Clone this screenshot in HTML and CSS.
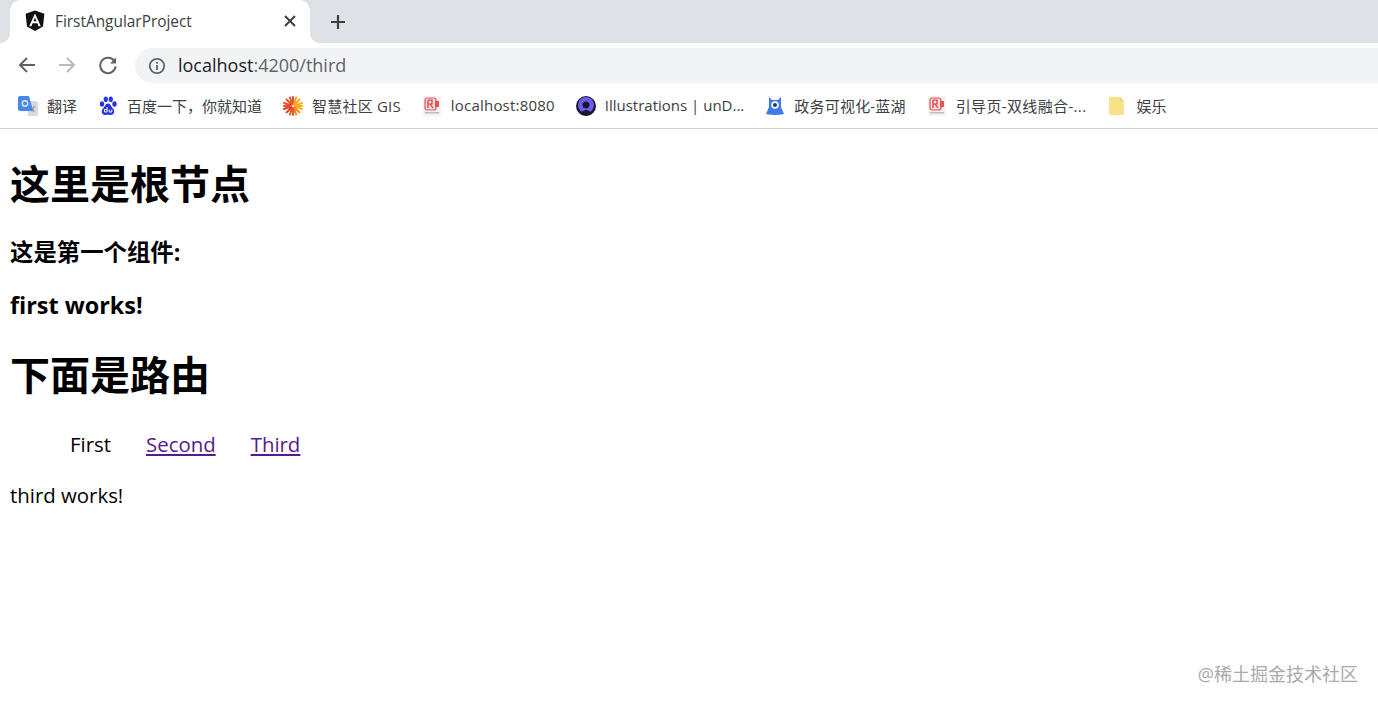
FILE: index.html
```html
<!DOCTYPE html>
<html lang="zh">
<head>
  <meta charset="UTF-8">
  <title>FirstAngularProject</title>
  <link rel="stylesheet" href="styles.css">
</head>
<body>
  <!-- Tab strip -->
  <div class="tabstrip">
    <div class="tab">
      <svg class="tab-icon" width="20" height="22" viewBox="0 0 20 22">
        <path d="M10 0.5 L0.6 3.8 L2 16.4 L10 21 L18 16.4 L19.4 3.8 Z" fill="#111"/>
        <path d="M10 3.4 L4.2 16.2 H6.4 L7.6 13.2 H12.4 L13.6 16.2 H15.8 Z M8.5 11.3 L10 7.7 L11.5 11.3 Z" fill="#fff" fill-rule="evenodd"/>
      </svg>
      <span class="tab-title">FirstAngularProject</span>
      <svg class="tab-close" width="12" height="12" viewBox="0 0 12 12">
        <path d="M1 1 L11 11 M11 1 L1 11" stroke="#3c4043" stroke-width="2" fill="none"/>
      </svg>
    </div>
    <svg class="new-tab" width="16" height="16" viewBox="0 0 16 16">
      <path d="M8 1 V15 M1 8 H15" stroke="#3c4043" stroke-width="2.2" fill="none"/>
    </svg>
  </div>

  <!-- Toolbar -->
  <div class="toolbar">
    <div class="nav-btns">
      <svg width="20" height="20" viewBox="0 0 20 20">
        <path d="M18 10 H3 M10 3 L3 10 L10 17" stroke="#5f6368" stroke-width="2" fill="none"/>
      </svg>
      <svg width="20" height="20" viewBox="0 0 20 20">
        <path d="M2 10 H17 M10 3 L17 10 L10 17" stroke="#b9bbbe" stroke-width="2" fill="none"/>
      </svg>
      <svg width="20" height="20" viewBox="-1 0 20 20">
        <path d="M16.4 6.2 A7.7 7.7 0 1 0 17.6 11.4" stroke="#5f6368" stroke-width="2" fill="none"/>
        <path d="M18 2.4 V8.4 H12 Z" fill="#5f6368"/>
      </svg>
    </div>
    <div class="omnibox">
      <svg width="18" height="18" viewBox="0 0 18 18">
        <circle cx="9" cy="9" r="7.2" stroke="#5f6368" stroke-width="1.8" fill="none"/>
        <path d="M9 8 V13 M9 5 V6.8" stroke="#5f6368" stroke-width="1.8" fill="none"/>
      </svg>
      <span class="url"><span class="url-host">localhost</span>:4200/third</span>
    </div>
  </div>

  <!-- Bookmarks -->
  <div class="bookmarks">
    <div class="bookmark">
      <svg width="20" height="20" viewBox="0 0 20 20">
        <path d="M8 5 H18 Q20 5 20 7 V19 Q20 20 18 20 H10 Z" fill="#d5d9e0"/>
        <path d="M13 10 L16 16 M17 10 L13 15" stroke="#8d97a8" stroke-width="1.200" fill="none"/>
        <path d="M2 0 H10 Q11 0 11.300 1 L15 15 H2 Q0 15 0 13 V2 Q0 0 2 0 Z" fill="#4a86e8"/>
        <circle cx="7" cy="7.500" r="2.700" stroke="#dce8fb" stroke-width="1.400" fill="none"/>
      </svg>
      <span>翻译</span>
    </div>
    <div class="bookmark">
      <svg width="20" height="20" viewBox="-1 0 20 20">
        <ellipse cx="3" cy="8" rx="2.200" ry="2.800" fill="#2932e1"/>
        <ellipse cx="6.800" cy="3.200" rx="2.100" ry="2.800" fill="#2932e1"/>
        <ellipse cx="11.800" cy="3.200" rx="2.100" ry="2.800" fill="#2932e1"/>
        <ellipse cx="15.500" cy="8" rx="2.200" ry="2.800" fill="#2932e1"/>
        <path d="M9 7.500 C6 7.500 6 11 4 12.500 C1.500 15 3 19.500 6.500 19 C8 18.700 10 18.700 11.500 19 C15 19.500 16.500 15 14 12.500 C12 11 12 7.500 9 7.500 Z" fill="#2932e1"/>
        <path d="M8 11 V16 H5.500 V13.500 H8 M10.200 13.500 V16 H12.800 V13.500" stroke="#fff" stroke-width="1" fill="none"/>
      </svg>
      <span>百度一下，你就知道</span>
    </div>
    <div class="bookmark">
      <svg width="20" height="20" viewBox="0 0 20 20">
        <g stroke-width="2" fill="none" stroke-linecap="round">
          <path d="M10 1 V8 M7 1.500 L9 8" stroke="#e8512a"/>
          <path d="M13 1.500 L11 8 M16.400 3.600 L11.500 8.500" stroke="#f7a21b"/>
          <path d="M19 7 L12 9.500 M19 10 H12 M19 13 L12 10.500" stroke="#f9b21d"/>
          <path d="M16.400 16.400 L11.500 11.500 M13 18.500 L11 12" stroke="#f08a1d"/>
          <path d="M10 19 V12 M7 18.500 L9 12" stroke="#ea5b24"/>
          <path d="M3.600 16.400 L8.500 11.500 M1 13 L8 10.500" stroke="#e23f2b"/>
          <path d="M1 10 H8 M1 7 L8 9.500 M3.600 3.600 L8.500 8.500" stroke="#e8512a"/>
        </g>
      </svg>
      <span class="bm-latin">智慧社区 GIS</span>
    </div>
    <div class="bookmark">
      <svg width="20" height="20" viewBox="0 0 20 20">
        <rect x="1" y="0" width="18" height="20" fill="#f3f3f3"/>
        <rect x="3" y="2" width="11" height="12" rx="2" fill="#f9d9d9" stroke="#e2545a" stroke-width="1.200"/>
        <path d="M6 4 V12 M6 4 H10 V8 H6 M8 8 L11 12" stroke="#d8343c" stroke-width="1.200" fill="none"/>
        <rect x="13" y="5" width="4" height="6" fill="#e2545a"/>
        <rect x="3" y="16" width="14" height="1.500" fill="#b9c4b9"/>
      </svg>
      <span class="bm-latin">localhost:8080</span>
    </div>
    <div class="bookmark">
      <svg width="20" height="20" viewBox="0 0 20 20">
        <circle cx="10" cy="10" r="10" fill="#1b1534"/>
        <circle cx="10" cy="9" r="8" fill="#6c5ce7"/>
        <path d="M6.500 9 A3.500 3.500 0 0 1 13.500 9 Q13.500 12 10 12.500 Q6.500 12 6.500 9 Z" fill="#1b1534"/>
        <path d="M4 18 Q10 10 16 18 Q10 21 4 18 Z" fill="#1b1534"/>
      </svg>
      <span>Illustrations | unD...</span>
    </div>
    <div class="bookmark">
      <svg width="20" height="20" viewBox="0 0 20 20">
        <path d="M4 1 L7 4 H13 L16 1 L16 11 L19 18 Q10 20 1 18 L4 11 Z" fill="#3f7be8"/>
        <circle cx="10" cy="9" r="3.800" fill="#fff"/>
        <circle cx="10" cy="9" r="2" fill="#1d3a78"/>
      </svg>
      <span class="bm-latin">政务可视化-蓝湖</span>
    </div>
    <div class="bookmark">
      <svg width="20" height="20" viewBox="0 0 20 20">
        <rect x="1" y="0" width="18" height="20" fill="#f3f3f3"/>
        <rect x="3" y="2" width="11" height="12" rx="2" fill="#f9d9d9" stroke="#e2545a" stroke-width="1.200"/>
        <path d="M6 4 V12 M6 4 H10 V8 H6 M8 8 L11 12" stroke="#d8343c" stroke-width="1.200" fill="none"/>
        <rect x="13" y="5" width="4" height="6" fill="#e2545a"/>
        <rect x="3" y="16" width="14" height="1.500" fill="#b9c4b9"/>
      </svg>
      <span class="bm-wide">引导页-双线融合-...</span>
    </div>
    <div class="bookmark">
      <svg width="20" height="20" viewBox="-1 0 20 20">
        <path d="M2 1 Q1 1 1 2 V19 H16 V5 L12 1 Z" fill="#fbe08a"/>
        <path d="M12 1 L16 5 H12 Z" fill="#f5d36b"/>
      </svg>
      <span>娱乐</span>
    </div>
  </div>

  <!-- Page content -->
  <div class="page">
    <h1 class="root-title">这里是根节点</h1>
    <h3>这是第一个组件:</h3>
    <h3 class="first-works">first works!</h3>
    <h1 class="route-title">下面是路由</h1>
    <ul class="nav-list">
      <li>First</li>
      <li><a href="#second">Second</a></li>
      <li><a href="#third">Third</a></li>
    </ul>
    <p class="outlet">third works!</p>
  </div>

  <div class="watermark">@稀土掘金技术社区</div>
</body>
</html>
```

FILE: styles.css
```css
html, body {
  height: 705px;
  overflow: hidden;
}
body {
  margin: 0;
  position: relative;
  background: #fff;
  font-family: "Open Sans", "Noto Sans CJK SC", sans-serif;
  color: #000;
}

/* tab strip */
.tabstrip {
  height: 43px;
  background: #dee1e6;
  display: flex;
  align-items: center;
  padding-left: 10px;
}
.tab {
  position: relative;
  width: 300px;
  height: 43px;
  box-sizing: border-box;
  background: #fff;
  border-radius: 11px 11px 0 0;
  display: flex;
  align-items: center;
  padding: 0 14px 1px 15px;
}
/* the little flares at the foot of the active tab */
.tab::before,
.tab::after {
  content: "";
  position: absolute;
  bottom: 0;
  width: 10px;
  height: 10px;
}
.tab::before {
  left: -10px;
  background: radial-gradient(circle at 0 0, #dee1e6 9.5px, #fff 10.5px);
}
.tab::after {
  right: -10px;
  background: radial-gradient(circle at 100% 0, #dee1e6 9.5px, #fff 10.5px);
}
.tab-title {
  flex: 1;
  margin-left: 10px;
  font-size: 15.4px;
  color: #3c4043;
}
.new-tab {
  margin-left: 20px;
}

/* toolbar */
.toolbar {
  height: 43px;
  box-sizing: border-box;
  padding: 2px 0 0 17px;
  display: flex;
  align-items: center;
}
.nav-btns {
  display: flex;
  gap: 20px;
  margin: -2px 18px 0 0;
}
.omnibox {
  flex: 1;
  height: 35px;
  background: #f1f3f4;
  border-radius: 18px 0 0 18px;
  display: flex;
  align-items: center;
  padding-left: 13px;
}
.url {
  margin: -2px 0 0 12px;
  font-size: 18px;
  color: #5f6368;
}
.url-host {
  color: #202124;
}

/* bookmarks bar */
.bookmarks {
  height: 43px;
  box-sizing: border-box;
  border-bottom: 1px solid #d2d2d2;
  padding: 0 0 4px 18px;
  display: flex;
  align-items: center;
  gap: 21px;
}
.bookmark {
  display: flex;
  align-items: center;
  font-size: 15px;
  color: #3c4043;
}
.bookmark svg {
  margin-top: 2px;
}
.bookmark span {
  margin-left: 9px;
}
.bm-latin {
  letter-spacing: 0.2px;
}
.bm-wide {
  letter-spacing: 0.35px;
}

/* page */
.page {
  padding: 0 10px;
}
h1 {
  font-size: 40px;
  line-height: 53px;
  margin: 27px 0;
}
.root-title {
  margin-top: 28px;
}
.route-title {
  margin: 28px 0 30px;
}
h3 {
  font-size: 23.4px;
  line-height: 30px;
  margin: 23px 0;
}
.nav-list {
  display: flex;
  list-style: none;
  margin: 0;
  padding-left: 50px;
  font-size: 20.4px;
  line-height: 27px;
}
.nav-list li {
  margin: 0 10px;
  padding-right: 15px;
}
.nav-list a {
  color: #551a8b;
}
.outlet {
  font-size: 20.4px;
  line-height: 27px;
  margin: 24px 0;
}

.watermark {
  position: absolute;
  right: 20px;
  bottom: 19px;
  font-size: 18px;
  color: #a9a9a9;
}
```
